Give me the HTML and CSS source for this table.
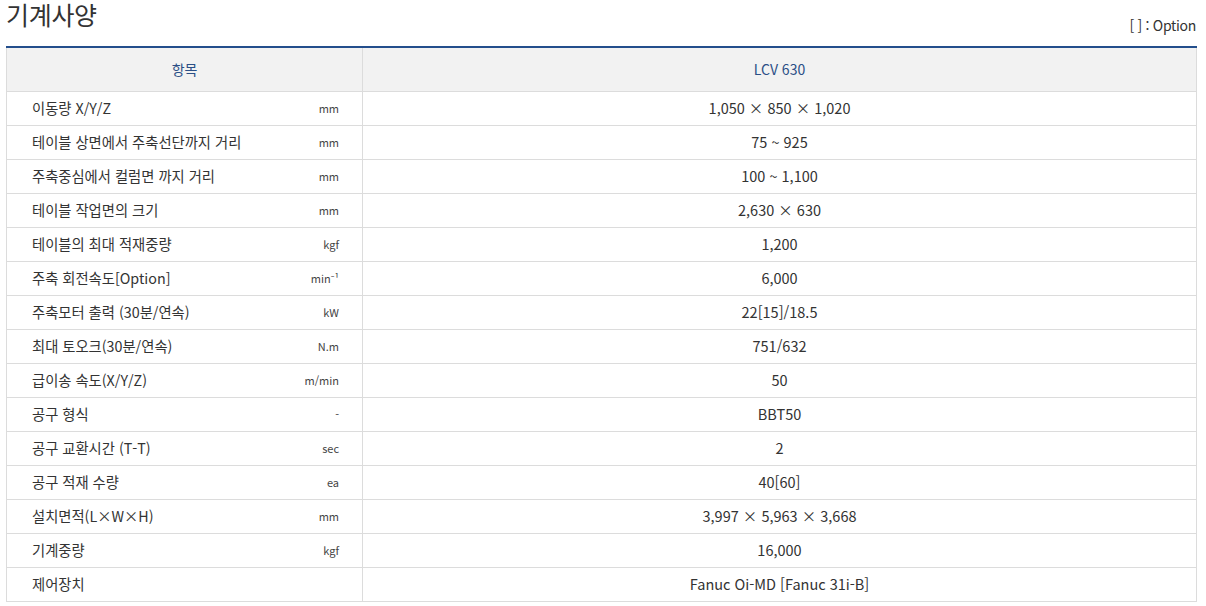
FILE: index.html
```html
<!DOCTYPE html>
<html lang="ko">
<head>
<meta charset="utf-8">
<link rel="stylesheet" href="styles.css">
</head>
<body>
<div class="wrap">
  <div class="head">
    <h2 class="title">기계사양</h2>
    <span class="note">[ ] : Option</span>
  </div>
  <table class="spec">
    <colgroup><col class="c-label"><col class="c-unit"><col class="c-val"></colgroup>
    <thead>
      <tr><th colspan="2">항목</th><th>LCV 630</th></tr>
    </thead>
    <tbody>
      <tr><td class="label">이동량 X/Y/Z</td><td class="unit">mm</td><td class="val">1,050 × 850 × 1,020</td></tr>
      <tr><td class="label">테이블 상면에서 주축선단까지 거리</td><td class="unit">mm</td><td class="val">75 ~ 925</td></tr>
      <tr><td class="label">주축중심에서 컬럼면 까지 거리</td><td class="unit">mm</td><td class="val">100 ~ 1,100</td></tr>
      <tr><td class="label">테이블 작업면의 크기</td><td class="unit">mm</td><td class="val">2,630 × 630</td></tr>
      <tr><td class="label">테이블의 최대 적재중량</td><td class="unit">kgf</td><td class="val">1,200</td></tr>
      <tr><td class="label">주축 회전속도[Option]</td><td class="unit">min⁻¹</td><td class="val">6,000</td></tr>
      <tr><td class="label">주축모터 출력 (30분/연속)</td><td class="unit">kW</td><td class="val">22[15]/18.5</td></tr>
      <tr><td class="label">최대 토오크(30분/연속)</td><td class="unit">N.m</td><td class="val">751/632</td></tr>
      <tr><td class="label">급이송 속도(X/Y/Z)</td><td class="unit">m/min</td><td class="val">50</td></tr>
      <tr><td class="label">공구 형식</td><td class="unit">-</td><td class="val">BBT50</td></tr>
      <tr><td class="label">공구 교환시간 (T-T)</td><td class="unit">sec</td><td class="val">2</td></tr>
      <tr><td class="label">공구 적재 수량</td><td class="unit">ea</td><td class="val">40[60]</td></tr>
      <tr><td class="label">설치면적(L×W×H)</td><td class="unit">mm</td><td class="val">3,997 × 5,963 × 3,668</td></tr>
      <tr><td class="label">기계중량</td><td class="unit">kgf</td><td class="val">16,000</td></tr>
      <tr><td class="label">제어장치</td><td class="unit"></td><td class="val">Fanuc Oi-MD [Fanuc 31i-B]</td></tr>
    </tbody>
  </table>
</div>
</body>
</html>
```

FILE: styles.css
```css
* { box-sizing: border-box; }
html, body { margin: 0; padding: 0; background: #fff; }
body {
  font-family: "Noto Sans CJK KR", "Noto Sans", sans-serif;
  color: #333;
}
.wrap {
  width: 1196px;
  padding-left: 6px;
}
.head {
  display: flex;
  justify-content: space-between;
  align-items: flex-end;
  height: 46px;
}
.title {
  margin: 0;
  align-self: flex-start;
  font-size: 25px;
  font-weight: 400;
  line-height: 28px;
  color: #333;
  letter-spacing: -0.3px;
}
.note {
  font-size: 14px;
  line-height: 16px;
  margin-bottom: 13px;
  color: #333;
  letter-spacing: -0.3px;
}
.spec {
  width: 1190px;
  border-collapse: collapse;
  border-top: 2px solid #234e8c;
  table-layout: fixed;
}
.c-label { width: 260px; }
.c-unit { width: 96px; }
.c-val { width: 834px; }
.spec th {
  background: #f2f2f2;
  color: #2b4f86;
  font-weight: 400;
  font-size: 14px;
  height: 44px;
  text-align: center;
  border: 1px solid #dcdcdc;
  border-top: none;
  padding: 0;
}
.spec td {
  height: 34px;
  border-top: 1px solid #dcdcdc;
  border-bottom: 1px solid #dcdcdc;
  padding: 0;
  font-size: 14px;
  line-height: 16px;
  color: #333;
}
.spec td.label {
  border-left: 1px solid #dcdcdc;
  padding-left: 25px;
  white-space: nowrap;
  font-size: 14.3px;
}
.spec td.unit {
  text-align: right;
  padding-right: 23px;
  font-size: 11px;
  color: #444;
}
.spec td.val {
  border-left: 1px solid #dcdcdc;
  border-right: 1px solid #dcdcdc;
  text-align: center;
  font-size: 14.5px;
}
```
